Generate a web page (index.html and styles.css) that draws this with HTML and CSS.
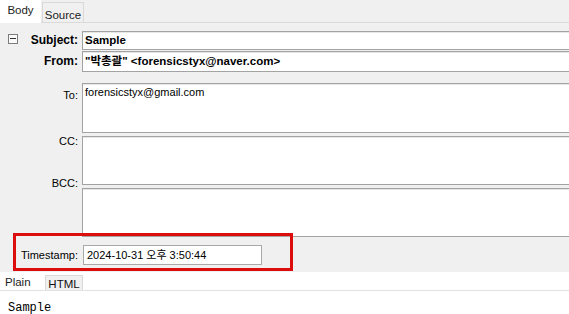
FILE: index.html
```html
<!DOCTYPE html>
<html lang="en">
<head>
    <meta charset="UTF-8">
    <title>Message Body</title>
    <link rel="stylesheet" href="styles.css">
</head>
<body>
    <div class="tabbar top">
        <div class="tab active">Body</div>
        <div class="tab">Source</div>
    </div>

    <div class="form">
        <div class="row subject-row">
            <div class="label bold">
                <span class="collapse"></span>
                <span>Subject:</span>
            </div>
            <div class="field bold">Sample</div>
        </div>
        <div class="row from-row">
            <div class="label bold">From:</div>
            <div class="field bold">"박총괄" &lt;forensicstyx@naver.com&gt;</div>
        </div>
        <div class="row to-row">
            <div class="label">To:</div>
            <div class="field area">forensicstyx@gmail.com</div>
        </div>
        <div class="row cc-row">
            <div class="label">CC:</div>
            <div class="field area"></div>
        </div>
        <div class="row bcc-row">
            <div class="label">BCC:</div>
            <div class="field area"></div>
        </div>
    </div>

    <div class="stamp">
        <div class="label">Timestamp:</div>
        <div class="stamp-field">2024-10-31 오후 3:50:44</div>
        <div class="highlight"></div>
    </div>

    <div class="tabbar bottom">
        <div class="tab active">Plain</div>
        <div class="tab">HTML</div>
    </div>
    <div class="content">Sample</div>
</body>
</html>
```

FILE: styles.css
```css
body {
    margin: 0;
    font-family: "Liberation Sans", "Noto Sans CJK KR", sans-serif;
    font-size: 11px;
    color: #000;
    background: #f0f0f0;
    overflow: hidden;
}

.bold {
    font-weight: bold;
    font-size: 12px;
}

/* Tab bars */
.tabbar {
    display: flex;
    height: 22px;
    border-bottom: 1px solid #dadada;
}

.tab {
    box-sizing: border-box;
    width: 41px;
    margin-top: 3px;
    padding-top: 3px;
    text-align: center;
    background: #f0f0f0;
    border: 1px solid #d9d9d9;
    border-bottom: none;
    color: #222;
}

.tab.active {
    margin-top: 0;
    height: 23px;
    padding-top: 4px;
    background: #fff;
    border: none;
    font-size: 11.5px;
}

.tabbar.top .tab:not(.active) {
    margin-left: 1px;
    margin-top: 2px;
    padding-top: 6px;
    width: 42px;
    font-size: 11.5px;
}

.tabbar.bottom {
    background: #fff;
    height: 18px;
    border-bottom-color: #e2e2e2;
}

.tabbar.bottom .tab.active {
    width: 45px;
    height: 18px;
    padding-top: 4px;
    text-align: left;
    padding-left: 5px;
}

.tabbar.bottom .tab:not(.active) {
    width: 38px;
    font-size: 11.5px;
    line-height: 13px;
    color: #111;
    padding-top: 2px;
    margin-top: 3px;
}

/* Header fields */
.form {
    padding-top: 8px;
}

.row {
    display: flex;
}

.label {
    box-sizing: border-box;
    width: 82px;
    flex-shrink: 0;
    padding-right: 4px;
    text-align: right;
    line-height: 13px;
}

.field {
    flex: 1;
    margin-right: -4px;
    box-sizing: border-box;
    background: #fff;
    border: 1px solid #a3a3a3;
    box-shadow: inset 0 1px 0 #e6e6e6;
    padding: 0 2px;
    white-space: nowrap;
}

.field.bold {
    font-size: 11.5px;
}

.subject-row .label {
    display: flex;
    align-items: center;
}

.subject-row .label span:last-child {
    margin-left: auto;
}

.collapse {
    position: relative;
    box-sizing: border-box;
    width: 10px;
    height: 10px;
    margin-left: 8px;
    margin-top: -4px;
    border: 1px solid #7c7c7c;
    background: #fafafa;
}

.collapse::after {
    content: '';
    position: absolute;
    left: 1px;
    right: 1px;
    top: 3px;
    height: 1px;
    background: #333;
}

.subject-row .field {
    height: 19px;
    line-height: 17px;
}

.from-row {
    margin-top: 1px;
    align-items: center;
}

.from-row .field {
    height: 21px;
    line-height: 19px;
}

.to-row {
    margin-top: 11px;
}

.to-row .label {
    padding-top: 6px;
}

.to-row .field {
    height: 50px;
    padding-top: 2px;
    line-height: 13px;
}

.cc-row {
    margin-top: 3px;
}

.cc-row .label {
    margin-top: -1px;
}

.cc-row .field {
    height: 49px;
}

.bcc-row {
    margin-top: 3px;
}

.bcc-row .label {
    margin-top: -11px;
}

.bcc-row .field {
    height: 49px;
}

/* Timestamp */
.stamp {
    position: relative;
    display: flex;
    align-items: center;
    height: 35px;
    background: #f0f0f0;
}

.stamp .label {
    padding-top: 1px;
}

.stamp-field {
    box-sizing: border-box;
    width: 179px;
    height: 20px;
    margin-left: 1px;
    margin-top: 1px;
    padding-left: 3px;
    line-height: 18px;
    background: #fff;
    border: 1px solid #a9a9a9;
    font-size: 11px;
}

.highlight {
    position: absolute;
    left: 13px;
    top: -4px;
    width: 280px;
    height: 38px;
    box-sizing: border-box;
    border: 3px solid #db0d0d;
}

/* Body text */
.content {
    background: #fff;
    height: 22px;
    padding: 10px 0 0 8px;
    font-family: "Liberation Mono", monospace;
    font-size: 12px;
}
```
